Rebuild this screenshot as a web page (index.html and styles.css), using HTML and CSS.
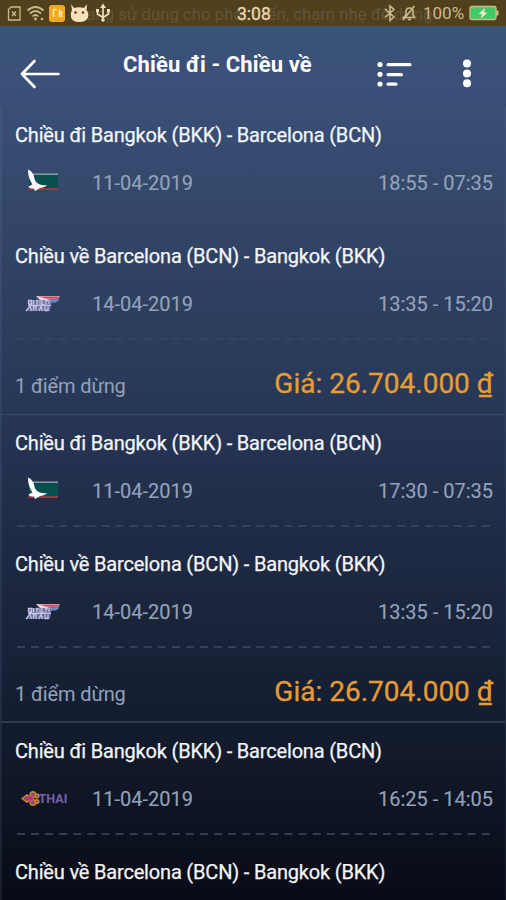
FILE: index.html
```html
<!DOCTYPE html>
<html lang="vi">
<head>
<meta charset="utf-8">
<title>Chiều đi - Chiều về</title>
<link rel="stylesheet" href="styles.css">
</head>
<body>
<svg class="defs" width="0" height="0" aria-hidden="true">
  <symbol id="cathay" viewBox="0 0 50 30">
    <path fill="#07504d" d="M13 6H42V21H13z"/>
    <path fill="#8196a5" d="M17 5.4H42V7H17z"/>
    <path fill="#b92d3e" d="M12 20.2H42V22H12z"/>
    <path fill="#fff" d="M12.2 1.5C16 3 18 6.500 18.500 11C20 15.500 24 17.500 31 17.300C29 19.500 26 19.800 24 20L19 23L18 20.500C14.500 20.500 12.800 20 12.500 18.500L16.500 16.500C13.500 12 11.500 6 12.200 1.500z"/>
  </symbol>
  <symbol id="british" viewBox="0 0 50 30">
    <path fill="#d88b9e" d="M20 7H44L42 10.500H25z"/>
    <path fill="#cf4c60" d="M25 8H43L42 9.500H29z"/>
    <path fill="#e5d9e4" d="M20 7L26 8.500L34 11H24z"/>
    <path fill="#5f8fc0" d="M33 10.500H44L40 13.500H35z"/>
    <path fill="#7f83bd" d="M13 11H36L34 22H10L13 17z" opacity=".75"/>
    <path fill="none" stroke="#c5c3e3" stroke-width="1.300" d="M12.500 15V11.500H15.500V15H12.500M17.500 11V15.500M20 11.500H22.500M21 11V15.500M24 15.500V11.500M26 11V15.500H28.500M28.500 11.500H32M30 11V15.500M33 11V15M10 22L14 17L15.500 22M17.500 22V17.500H20M20 22V17M23 22L25 17L26.500 22M29 17.500V21.500H32V17.500M12 16.300H35"/>
  </symbol>
  <symbol id="thai" viewBox="0 0 50 30" overflow="visible">
    <g fill="#8c4966" stroke="#c98431" stroke-width="1.500"><circle cx="17" cy="10.500" r="2.800"/><circle cx="17" cy="18.500" r="2.800"/><circle cx="21" cy="12" r="1.800"/><circle cx="21" cy="17.500" r="1.800"/><path d="M6 14.500L11 11L17 14.500L11 18z"/></g>
    <path fill="#bd2c87" d="M10 14.500L14 11.500L18 14.500L14 17.500z"/>
    <text x="22.500" y="19" textLength="29" lengthAdjust="spacingAndGlyphs" class="thai-word">THAI</text>
  </symbol>
</svg>
<div class="screen">
  <header class="status">
    <span class="ticker">Đang sử dụng cho phát triển, chạm nhẹ để dừng</span>
    <svg class="status-left" width="112" height="26" viewBox="0 0 112 26">
      <g fill="none" stroke="#cbb98c" stroke-width="1.300">
        <path d="M11 7H20V20H8.500V9.500zM12 11.500L16 16M16 11.500L12 16"/>
        <path stroke-width="1.700" d="M27.500 10.500Q35.500 3.500 43.500 10.500M30 13.500Q35.500 8.500 41 13.500M32.500 16.500Q35.500 13.500 38.500 16.500"/>
      </g>
      <circle cx="35.500" cy="19" r="1.400" fill="#cbb98c"/><circle cx="42" cy="19" r="1.300" fill="#cbb98c"/>
      <rect x="49" y="5" width="16" height="17" rx="3" fill="#f3a91f"/>
      <path d="M53.500 17V9.500H56.500M59.500 9V17M59.500 12H61.500V17" stroke="#ffe7b4" stroke-width="1.500" fill="none"/>
      <path d="M71 4L74 8Q79 6.500 84 8L87 4L86.500 10Q89 13 88 17Q87 22 79 22Q72 22 71 17Q70 13 72 10z" fill="#f5e2bd"/>
      <circle cx="75.500" cy="12.500" r="1.300" fill="#50401b"/><circle cx="83" cy="12.500" r="1.300" fill="#50401b"/>
      <path d="M103 6V21M97.500 11V14L103 17.500L108.500 14V10" fill="none" stroke="#f0dfb7" stroke-width="1.700"/>
      <path d="M103 3.500L106 8H100zM96 9H99V12H96zM107 9H110V12H107z" fill="#f0dfb7"/><circle cx="103" cy="20" r="1.800" fill="#f0dfb7"/>
    </svg>
    <span class="clock">3:08</span>
    <div class="status-right">
      <svg width="36" height="26" viewBox="0 0 36 26" fill="none" stroke="#cbb98c" stroke-width="1.600">
        <path d="M2 9L11 17L7 20.500V6L11 9.500L2 17.500"/>
        <path d="M20.500 17.500H31.500L30 15V11Q30 8 26.500 8Q23 8 23 12V15zM31.500 6L20 20M25 19.500H28"/>
      </svg>
      <span class="percent">100%</span>
      <svg class="battery" width="30" height="16" viewBox="0 0 30 16">
        <rect x="1" y="1.500" width="26" height="13" rx="1.500" fill="#3fca67" stroke="#cbb98c" stroke-width="1.300"/>
        <path d="M27 5.500H29.500V10.500H27z" fill="#cbb98c"/><path d="M16 3L9.500 9H13L12 13.500L18.500 7.500H15z" fill="#f1ecc8"/>
      </svg>
    </div>
  </header>
  <nav class="bar">
    <svg width="42" height="32" viewBox="0 0 42 32" fill="none" stroke="#fff" stroke-width="2.700" stroke-linecap="round" stroke-linejoin="round"><path d="M38.500 16H2M14.500 3L2 16L14.500 29"/></svg>
    <h1>Chiều đi - Chiều về</h1>
    <svg class="sort" width="36" height="30" viewBox="0 0 36 30" fill="#fff"><circle cx="3" cy="5.500" r="2.600"/><circle cx="3" cy="15.300" r="2.600"/><circle cx="3" cy="25" r="2.600"/><rect x="9.500" y="4" width="25" height="3.200" rx="1.500"/><rect x="9.500" y="14" width="16.500" height="3.200" rx="1.500"/><rect x="9.500" y="23.500" width="11" height="3.200" rx="1.500"/></svg>
    <svg class="more" width="10" height="30" viewBox="0 0 10 30" fill="#fff"><circle cx="5" cy="4.500" r="4"/><circle cx="5" cy="14.500" r="4"/><circle cx="5" cy="24.200" r="4"/></svg>
  </nav>
  <main class="list">
    <article class="card first">
      <section class="leg"><h2>Chiều đi Bangkok (BKK) - Barcelona (BCN)</h2><div class="row"><svg class="logo"><use href="#cathay"/></svg><span class="date">11-04-2019</span><span class="time">18:55 - 07:35</span></div><svg class="dash"><path d="M0 1H474"/></svg></section>
      <section class="leg"><h2>Chiều về Barcelona (BCN) - Bangkok (BKK)</h2><div class="row"><svg class="logo"><use href="#british"/></svg><span class="date">14-04-2019</span><span class="time">13:35 - 15:20</span></div><svg class="dash"><path d="M0 1H474"/></svg></section>
      <footer><span class="stops">1 điểm dừng</span><span class="price">Giá: 26.704.000 ₫</span></footer>
    </article>
    <article class="card second">
      <section class="leg"><h2>Chiều đi Bangkok (BKK) - Barcelona (BCN)</h2><div class="row"><svg class="logo"><use href="#cathay"/></svg><span class="date">11-04-2019</span><span class="time">17:30 - 07:35</span></div><svg class="dash"><path d="M0 1H474"/></svg></section>
      <section class="leg"><h2>Chiều về Barcelona (BCN) - Bangkok (BKK)</h2><div class="row"><svg class="logo"><use href="#british"/></svg><span class="date">14-04-2019</span><span class="time">13:35 - 15:20</span></div><svg class="dash"><path d="M0 1H474"/></svg></section>
      <footer><span class="stops">1 điểm dừng</span><span class="price">Giá: 26.704.000 ₫</span></footer>
    </article>
    <article class="card">
      <section class="leg"><h2>Chiều đi Bangkok (BKK) - Barcelona (BCN)</h2><div class="row"><svg class="logo"><use href="#thai"/></svg><span class="date">11-04-2019</span><span class="time">16:25 - 14:05</span></div><svg class="dash"><path d="M0 1H474"/></svg></section>
      <section class="leg"><h2>Chiều về Barcelona (BCN) - Bangkok (BKK)</h2></section>
    </article>
  </main>
</div>
</body>
</html>
```
FILE: styles.css
```css
* { box-sizing: border-box; }
body { margin: 0; font-family: Roboto, "Liberation Sans", sans-serif; }
h1, h2 { margin: 0; }
svg { display: block; flex: none; }
.defs { position: absolute; }
.screen {
  width: 506px; height: 900px; overflow: hidden;
  display: flex; flex-direction: column;
  background: linear-gradient(#3b5379 0, #3a5078 90px, #334668 220px, #293959 380px, #1e2a44 550px, #131c2e 730px, #080b16 900px);
}
.status { position: relative; height: 26px; flex: none; background: #50401b; display: flex; justify-content: space-between; overflow: hidden; }
.ticker { position: absolute; left: 75px; top: 3px; font-size: 16.8px; line-height: 22px; white-space: nowrap; color: #62553c; }
.status-left, .status-right { position: relative; }
.clock { position: absolute; left: 237px; top: 3px; font-size: 17.500px; line-height: 22px; color: #ead9b0; -webkit-text-stroke: .3px #ead9b0; }
.status-right { display: flex; align-items: center; width: 123px; }
.percent { width: 40px; margin-left: 4px; font-size: 17px; line-height: 24px; color: #cbb98c; white-space: nowrap; }
.battery { margin-left: 6px; }
.bar { height: 81px; flex: none; display: flex; align-items: flex-start; padding: 32px 34px 0 20px; }
.bar h1 { margin: -7px 0 0 61px; width: 190px; font-size: 22px; line-height: 28px; font-weight: 700; letter-spacing: .12px; color: #fff; white-space: nowrap; }
.sort { margin: 1px 0 0 64px; }
.more { margin: 1px 0 0 auto; }
.list { flex: none; }
.card { border-left: 2px solid rgba(110, 135, 175, .15); border-right: 1px solid rgba(110, 135, 175, .15); }
.card.first, .card.second { height: 308px; border-bottom: 1px solid #3a4a66; }
.card.second { border-bottom: 2px solid #2f3c50; }
.leg { height: 121px; padding: 14px 12px 0 13px; }
.leg h2 { font-size: 20px; line-height: 28px; font-weight: 400; letter-spacing: -.18px; color: #f3f5f8; white-space: nowrap; -webkit-text-stroke: .25px #f3f5f8; }
.row { display: flex; align-items: center; height: 30px; margin-top: 19px; font-size: 20px; color: #93a2ba; -webkit-text-stroke: .15px #93a2ba; }
.logo { width: 50px; height: 30px; margin-left: 1px; overflow: visible; -webkit-text-stroke: 0; }
.date { margin-left: 26px; }
.time { margin-left: auto; }
.dash { width: 474px; height: 2px; margin: 19px 0 0 1.500px; fill: none; stroke: #3c4b62; stroke-width: 1.500px; stroke-dasharray: 8 6.08; }
.first .dash { stroke: #364865; }
.first .leg:first-child .dash { visibility: hidden; }
.card footer { display: flex; align-items: center; justify-content: space-between; height: 66px; padding: 4px 12px 0 13px; font-size: 20px; color: #93a2ba; }
.stops { padding-top: 4px; letter-spacing: -.12px; }
.price { margin-top: -2px; font-size: 28px; color: #e69c32; -webkit-text-stroke: .3px #e69c32; }
.thai-word { font: 700 12px Roboto, sans-serif; fill: #7761a9; }
```
